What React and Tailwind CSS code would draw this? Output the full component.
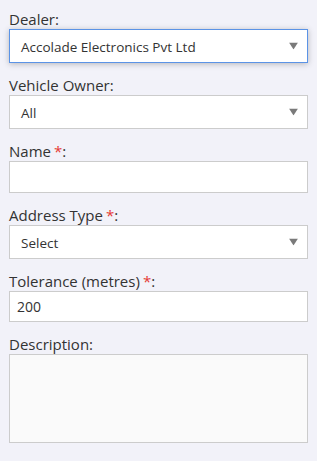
import React from "react";

function Arrow() {
  return (
    <svg width="9" height="7" viewBox="0 0 9 7" className="absolute right-[9px] top-1/2 -translate-y-1/2">
      <polygon points="0,0 9,0 4.5,7" fill="#7a7a7a" />
    </svg>
  );
}

function Label({ children, req }) {
  return (
    <div className="h-5 leading-5 text-[15px] text-[#333]">
      {children}
      {req && <span className="text-[#e53935] ml-[3px]">*</span>}:
    </div>
  );
}

function Select({ value, focus }) {
  return (
    <div
      className={
        "relative h-[34px] bg-white flex items-center pl-[11px] pt-[2px] text-[13.5px] text-[#333] border " +
        (focus ? "border-[#5b93e6] shadow-[0_1px_6px_rgba(0,0,0,0.25)]" : "border-[#cccccc]")
      }
    >
      {value}
      <Arrow />
    </div>
  );
}

function Input({ value, h = "h-[32px]" }) {
  return (
    <div className={"bg-white border border-[#cccccc] flex items-center pl-[7px] text-[14px] text-[#333] " + h}>
      {value}
    </div>
  );
}

export default function App() {
  return (
    <div
      className="w-[317px] h-[461px] bg-[#f2f2f9] px-[9px] pt-[9px] flex flex-col"
      style={{ fontFamily: '"Open Sans", sans-serif' }}
    >
      <div className="flex flex-col">
        <Label>Dealer</Label>
        <Select value="Accolade Electronics Pvt Ltd" focus />
      </div>
      <div className="flex flex-col mt-3">
        <Label>Vehicle Owner</Label>
        <Select value="All" />
      </div>
      <div className="flex flex-col mt-3">
        <Label req>Name</Label>
        <Input value="" />
      </div>
      <div className="flex flex-col mt-3">
        <Label req>Address Type</Label>
        <Select value="Select" />
      </div>
      <div className="flex flex-col mt-3">
        <Label req>Tolerance (metres)</Label>
        <Input value="200" h="h-[31px]" />
      </div>
      <div className="flex flex-col mt-3">
        <Label>Description</Label>
        <div className="h-[89px] bg-[#fafafa] border border-[#cccccc]"></div>
      </div>
    </div>
  );
}
